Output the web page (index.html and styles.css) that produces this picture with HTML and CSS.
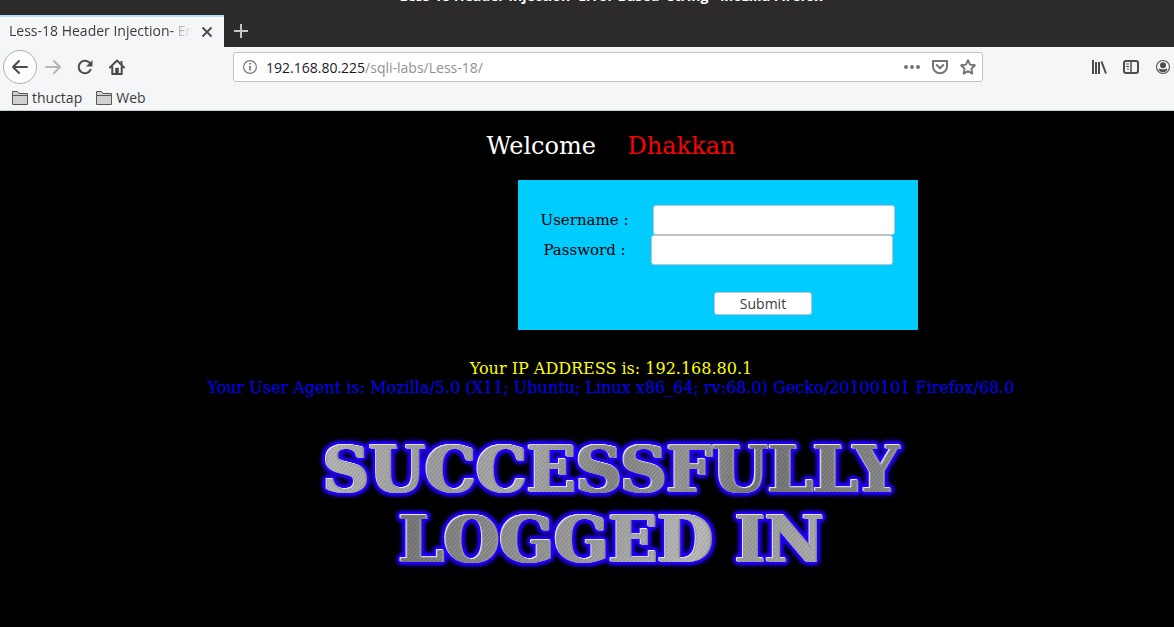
FILE: index.html
```html
<!DOCTYPE html>
<html lang="en">
<head>
<meta charset="utf-8">
<title>Less-18 Header Injection- Error Based- string</title>
<link rel="stylesheet" href="styles.css">
</head>
<body>
<header class="chrome">
  <div class="titlebar"><span>Less-18 Header Injection- Error Based- string - Mozilla Firefox</span></div>
  <div class="tabs">
    <div class="tab">
      <span class="tab-title">Less-18 Header Injection- Error Based- string</span>
      <button class="icon-btn" aria-label="Close tab"><svg width="12" height="12" viewBox="0 0 12 12"><path d="M1.500 1.500l9 9M10.500 1.500l-9 9" stroke="#4a4a4c" stroke-width="1.800"/></svg></button>
    </div>
    <button class="icon-btn new-tab" aria-label="New tab"><svg width="14" height="14" viewBox="0 0 14 14"><path d="M7 0v14M0 7h14" stroke="#c4c4c5" stroke-width="2"/></svg></button>
  </div>
  <nav class="toolbar">
    <div class="nav-buttons">
      <button class="icon-btn back" aria-label="Back"><svg width="18" height="16" viewBox="0 0 18 16"><path d="M16 8H2M8 2L2 8l6 6" stroke="#4c4c4e" stroke-width="2" stroke-linecap="round" stroke-linejoin="round"/></svg></button>
      <button class="icon-btn" aria-label="Forward" disabled><svg width="16" height="16" viewBox="0 0 16 16"><path d="M1 8h14M9 2l6 6-6 6" stroke="#b5b6b8" stroke-width="2" stroke-linecap="round" stroke-linejoin="round"/></svg></button>
      <button class="icon-btn" aria-label="Reload"><svg width="16" height="16" viewBox="0 0 16 16"><path d="M13.200 4.500A6.300 6.300 0 1 0 13.600 10.800" stroke="#4c4c4e" stroke-width="2" stroke-linecap="round"/><path d="M15.500 1v6.500H9z" fill="#4c4c4e"/></svg></button>
      <button class="icon-btn" aria-label="Home"><svg width="16" height="16" viewBox="0 0 16 16"><path d="M1 8.500L8 1.500l7 7M3.300 8v7h9.400V8" stroke="#4c4c4e" stroke-width="2" stroke-linecap="round" stroke-linejoin="round"/><path d="M6.200 8.800h3.600V15H6.200z" fill="#4c4c4e"/><path d="M12.500 2v4" stroke="#4c4c4e" stroke-width="2"/></svg></button>
    </div>
    <div class="urlbar">
      <svg width="14" height="14" viewBox="0 0 14 14"><circle cx="7" cy="7" r="6.400" stroke="#77787a" stroke-width="1.200"/><path d="M7 6v4.500M7 3v1.600" stroke="#77787a" stroke-width="1.700"/></svg>
      <span class="url">192.168.80.225<span class="path">/sqli-labs/Less-18/</span></span>
      <button class="icon-btn" aria-label="Page actions"><svg width="16" height="16" viewBox="0 0 16 16"><g fill="#737476"><circle cx="2" cy="8" r="2"/><circle cx="8" cy="8" r="2"/><circle cx="14" cy="8" r="2"/></g></svg></button>
      <button class="icon-btn" aria-label="Save to Pocket"><svg width="16" height="16" viewBox="0 0 16 16"><path d="M1 2h14v5.500a7 6.800 0 0 1-14 0z" stroke="#737476" stroke-width="2" stroke-linejoin="round"/><path d="M4.800 6L8 9.200 11.200 6" stroke="#737476" stroke-width="2" stroke-linecap="round" stroke-linejoin="round"/></svg></button>
      <button class="icon-btn" aria-label="Bookmark this page"><svg width="16" height="16" viewBox="0 0 16 16"><path d="M8 1.200l2.100 4.400 4.800.7-3.500 3.400.9 4.900L8 12.200l-4.300 2.400.9-4.900L1.100 6.300l4.800-.7z" stroke="#737476" stroke-width="1.900" stroke-linejoin="round"/></svg></button>
    </div>
    <div class="tools">
      <button class="icon-btn" aria-label="Library"><svg width="16" height="16" viewBox="0 0 16 16"><path d="M2 1v14M5 3v12M8 3v12" stroke="#4c4c4e" stroke-width="2"/><path d="M10.500 2.500L15 14.500" stroke="#4c4c4e" stroke-width="2"/></svg></button>
      <button class="icon-btn" aria-label="Sidebars"><svg width="16" height="16" viewBox="0 0 16 16"><rect x="1" y="2" width="14" height="12" rx="2" stroke="#4c4c4e" stroke-width="2"/><path d="M8 2v12" stroke="#4c4c4e" stroke-width="1.500"/><path d="M3 5h3M3 7.500h3M4 10h2" stroke="#4c4c4e"/></svg></button>
      <button class="icon-btn" aria-label="Account"><svg width="16" height="16" viewBox="0 0 16 16"><circle cx="8" cy="8" r="6.500" stroke="#4c4c4e" stroke-width="1.100"/><circle cx="8" cy="6.200" r="3" fill="#4c4c4e"/><path d="M3.600 9.500c1.500 0 2.500 1 4.400 1s2.900-1 4.400-1c0 2-2 3.800-4.400 3.800S3.600 11.500 3.600 9.500z" fill="#4c4c4e"/></svg></button>
    </div>
  </nav>
  <div class="bookmarks">
    <a class="bookmark" href="#"><svg width="16" height="14" viewBox="0 0 16 14"><path d="M.5 13.500v-13h5l1.500 2h8.500v11z" fill="#d0d0d1" stroke="#58585a"/><path d="M1 4.500h14" stroke="#58585a"/></svg>thuctap</a>
    <a class="bookmark" href="#"><svg width="16" height="14" viewBox="0 0 16 14"><path d="M.5 13.500v-13h5l1.500 2h8.500v11z" fill="#d0d0d1" stroke="#58585a"/><path d="M1 4.500h14" stroke="#58585a"/></svg>Web</a>
  </div>
</header>
<main class="page">
  <div class="welcome">Welcome <span class="name">Dhakkan</span></div>
  <form class="login">
    <div class="row"><label for="uname">Username :</label><input id="uname" type="text"></div>
    <div class="row"><label for="passwd">Password :</label><input id="passwd" type="password"></div>
    <div class="submit-row"><button class="submit" type="button">Submit</button></div>
  </form>
  <div class="ip">Your IP ADDRESS is: 192.168.80.1</div>
  <div class="agent">Your User Agent is: Mozilla/5.0 (X11; Ubuntu; Linux x86_64; rv:68.0) Gecko/20100101 Firefox/68.0</div>
  <h1 class="banner"><span class="metal">SUCCESSFULLY</span><span class="metal second">LOGGED IN</span></h1>
</main>
</body>
</html>
```
FILE: styles.css
```css
* { box-sizing: border-box; }
body {
  margin: 0;
  min-height: 100vh;
  background: #000;
  font-family: "Open Sans", "Noto Sans", sans-serif;
  font-size: 14px;
  color: #3b3b3d;
  overflow-x: hidden;
}
svg { display: block; fill: none; flex: none; }
.icon-btn {
  display: grid;
  place-items: center;
  flex: none;
  padding: 0;
  border: 0;
  background: none;
}
.chrome { background: #f5f6f7; border-bottom: 1px solid #c5cfd0; }
.titlebar {
  display: flex;
  justify-content: center;
  align-items: flex-end;
  height: 15px;
  padding: 0 0 9px 48px;
  overflow: hidden;
  background: #2c2a2b;
  color: #fff;
  font-weight: 700;
  line-height: 20px;
  white-space: nowrap;
}
.tabs { display: flex; height: 32px; background: #2c2a2b; }
.tab {
  display: flex;
  align-items: center;
  gap: 8px;
  width: 224px;
  padding: 0 11px 0 9px;
  border-top: 2px solid #b9defc;
  background: #f5f6f7;
}
.tab-title {
  flex: 1;
  overflow: hidden;
  white-space: nowrap;
  line-height: 20px;
  padding-bottom: 2px;
  mask-image: linear-gradient(90deg, #000 165px, rgba(0, 0, 0, .4) 170px, transparent 100%);
}
.new-tab { width: 34px; }
.toolbar { display: flex; align-items: center; height: 40px; }
.nav-buttons { display: flex; align-items: center; gap: 16px; width: 233px; padding-left: 3px; }
.nav-buttons .back {
  width: 34px;
  height: 34px;
  margin-right: -8px;
  border: 1px solid #aeafb1;
  border-radius: 50%;
  background: #fdfdfd;
}
.urlbar {
  display: flex;
  align-items: center;
  gap: 12px;
  flex: 1;
  height: 30px;
  padding: 0 6px 0 9px;
  border: 1px solid #c3c5cb;
  border-radius: 3px;
  background: #fff;
}
.url { flex: 1; margin-left: -3px; color: #1c1c1f; }
.path { color: #919193; }
.tools { display: flex; gap: 16px; padding: 0 3px 0 108px; }
.bookmarks { display: flex; gap: 14px; height: 23px; padding: 0 0 2px 12px; }
.bookmark {
  display: flex;
  align-items: center;
  gap: 4px;
  color: inherit;
  text-decoration: none;
}
.page {
  display: flex;
  flex-direction: column;
  align-items: center;
  padding: 21px 0 24px 48px;
  font-family: "DejaVu Serif", serif;
  font-size: 16px;
  line-height: 19px;
}
.welcome { color: #fff; font-size: 24px; line-height: 29px; }
.name { margin-left: 24px; color: #f00; }
.login {
  width: 400px;
  margin: 19px 0 29px 214px;
  padding: 25px 0 15px;
  background: #0cf;
  color: #000;
  font-size: 15px;
}
.row { display: flex; justify-content: center; align-items: center; gap: 25px; }
.row label { line-height: 20px; }
.row input {
  width: 242px;
  height: 30px;
  padding: 0 8px;
  border: 1px solid #bcc3c9;
  border-radius: 3px;
  background: #fff;
}
.submit-row { display: flex; justify-content: center; padding: 27px 0 0 90px; }
.submit {
  width: 98px;
  height: 23px;
  padding: 0;
  border: 1px solid #bcc3c9;
  border-radius: 3px;
  background: #fff;
  color: #3b3b3d;
  font: 14px/20px "Open Sans", "Noto Sans", sans-serif;
}
.ip { color: #ff0; }
.agent { color: #00f; white-space: nowrap; }
.banner {
  display: flex;
  flex-direction: column;
  align-items: center;
  margin: 38px 0 0;
  font-size: 64px;
  font-weight: 700;
  line-height: 70px;
  filter: drop-shadow(0 0 1px #20f) drop-shadow(0 0 1px #20f) drop-shadow(0 0 1px #20f) drop-shadow(0 0 2px #20f) drop-shadow(0 0 1px #20f);
}
.metal {
  background:
    repeating-linear-gradient(130deg, rgba(255, 255, 255, .08) 0 1px, rgba(0, 0, 0, .08) 2px, transparent 3px),
    linear-gradient(100deg, #b4b4b4, #999 20%, #a8a8a8 35%, #808080 50%, #929292 62%, #707070 75%, #777 85%, #858585);
  background-clip: text;
  color: transparent;
  white-space: nowrap;
  filter: drop-shadow(1px 0 0 #999) drop-shadow(1px 0 0 #888) drop-shadow(-1px 0 0 #999) drop-shadow(-1px -1px 0 #e8e8f4);
}
.second {
  background:
    repeating-linear-gradient(130deg, rgba(255, 255, 255, .08) 0 1px, rgba(0, 0, 0, .08) 2px, transparent 3px),
    linear-gradient(100deg, #707070, #8a8a8a 25%, #999 45%, #b8b8b8 70%, #999 82%, #aaa);
  background-clip: text;
}
```
